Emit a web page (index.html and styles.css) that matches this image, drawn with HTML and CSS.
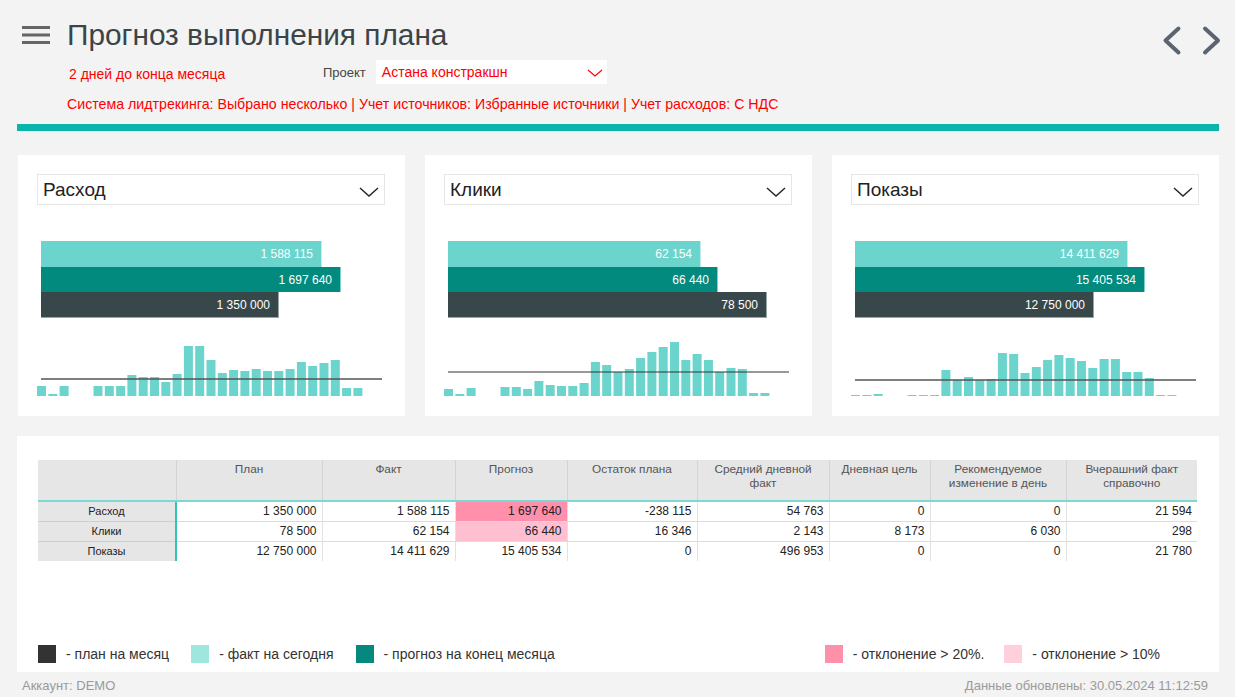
FILE: index.html
```html
<!DOCTYPE html>
<html lang="ru">
<head>
<meta charset="utf-8">
<title>Прогноз выполнения плана</title>
<link rel="stylesheet" href="styles.css">
</head>
<body>
<header class="top">
  <div class="title-row">
    <svg class="burger" viewBox="0 0 28 20" width="28" height="20">
      <rect x="0" y="1" width="28" height="3" fill="#666"/>
      <rect x="0" y="8.5" width="28" height="3" fill="#666"/>
      <rect x="0" y="16" width="28" height="3" fill="#666"/>
    </svg>
    <h1 class="title">Прогноз выполнения плана</h1>
    <svg class="nav" viewBox="0 0 62 31" width="62" height="31">
      <polyline points="18.5,3.5 5.5,15.5 18.5,27.5" fill="none" stroke="#5b6570" stroke-width="4" stroke-linecap="round" stroke-linejoin="round"/>
      <polyline points="45,3.5 58,15.5 45,27.5" fill="none" stroke="#5b6570" stroke-width="4" stroke-linecap="round" stroke-linejoin="round"/>
    </svg>
  </div>
  <div class="filter-row">
    <span class="days">2 дней до конца месяца</span>
    <span class="proj-label">Проект</span>
    <div class="proj-select">
      <span>Астана констракшн</span>
      <svg class="proj-chev" viewBox="0 0 16 8" width="16" height="8"><polyline points="1,1 8,7 15,1" fill="none" stroke="#f00" stroke-width="1.2"/></svg>
    </div>
  </div>
  <div class="filters-info">Система лидтрекинга: Выбрано несколько | Учет источников: Избранные источники | Учет расходов: С НДС</div>
</header>
<div class="accent"></div>

<section class="cards">
  <div class="card">
    <div class="card-select"><span>Расход</span><svg class="chev" viewBox="0 0 20 10" width="20" height="10"><polyline points="1,1 10,9 19,1" fill="none" stroke="#222" stroke-width="1.4"/></svg></div>
    <div class="hbars">
      <div class="hbar fact" style="width:281px">1 588 115</div>
      <div class="hbar forecast" style="width:300px">1 697 640</div>
      <div class="hbar plan" style="width:238px">1 350 000</div>
    </div>
    <svg class="spark" viewBox="0 0 387 60" width="387" height="60">
      <g fill="#6ad4cd">
        <rect x="19" y="50" width="9" height="10"/>
        <rect x="30.3" y="58" width="9" height="2"/>
        <rect x="41.6" y="50" width="9" height="10"/>
        <rect x="75.5" y="50" width="9" height="10"/>
        <rect x="86.8" y="50" width="9" height="10"/>
        <rect x="98.1" y="50" width="9" height="10"/>
        <rect x="109.4" y="39" width="9" height="21"/>
        <rect x="120.7" y="41" width="9" height="19"/>
        <rect x="132" y="41" width="9" height="19"/>
        <rect x="143.3" y="46" width="9" height="14"/>
        <rect x="154.6" y="38" width="9" height="22"/>
        <rect x="165.9" y="10" width="9" height="50"/>
        <rect x="177.2" y="10" width="9" height="50"/>
        <rect x="188.5" y="24" width="9" height="36"/>
        <rect x="199.8" y="37" width="9" height="23"/>
        <rect x="211.1" y="34" width="9" height="26"/>
        <rect x="222.4" y="35" width="9" height="25"/>
        <rect x="233.7" y="33" width="9" height="27"/>
        <rect x="245" y="35" width="9" height="25"/>
        <rect x="256.3" y="35" width="9" height="25"/>
        <rect x="267.6" y="33" width="9" height="27"/>
        <rect x="278.9" y="26" width="9" height="34"/>
        <rect x="290.2" y="30" width="9" height="30"/>
        <rect x="301.5" y="27" width="9" height="33"/>
        <rect x="312.8" y="24" width="9" height="36"/>
        <rect x="324.1" y="52" width="9" height="8"/>
        <rect x="335.4" y="52" width="9" height="8"/>
      </g>
      <line x1="23" y1="43" x2="364" y2="43" stroke="#555" stroke-width="1.4"/>
    </svg>
  </div>

  <div class="card">
    <div class="card-select"><span>Клики</span><svg class="chev" viewBox="0 0 20 10" width="20" height="10"><polyline points="1,1 10,9 19,1" fill="none" stroke="#222" stroke-width="1.4"/></svg></div>
    <div class="hbars">
      <div class="hbar fact" style="width:253px">62 154</div>
      <div class="hbar forecast" style="width:270px">66 440</div>
      <div class="hbar plan" style="width:319px">78 500</div>
    </div>
    <svg class="spark" viewBox="0 0 387 60" width="387" height="60">
      <g fill="#6ad4cd">
        <rect x="19" y="53" width="9" height="7"/>
        <rect x="30.3" y="58" width="9" height="2"/>
        <rect x="41.6" y="52" width="9" height="8"/>
        <rect x="75.5" y="51" width="9" height="9"/>
        <rect x="86.8" y="51" width="9" height="9"/>
        <rect x="98.1" y="53" width="9" height="7"/>
        <rect x="109.4" y="45" width="9" height="15"/>
        <rect x="120.7" y="49" width="9" height="11"/>
        <rect x="132" y="50" width="9" height="10"/>
        <rect x="143.3" y="50" width="9" height="10"/>
        <rect x="154.6" y="47" width="9" height="13"/>
        <rect x="165.9" y="26" width="9" height="34"/>
        <rect x="177.2" y="29" width="9" height="31"/>
        <rect x="188.5" y="36" width="9" height="24"/>
        <rect x="199.8" y="33" width="9" height="27"/>
        <rect x="211.1" y="22" width="9" height="38"/>
        <rect x="222.4" y="16" width="9" height="44"/>
        <rect x="233.7" y="11" width="9" height="49"/>
        <rect x="245" y="6" width="9" height="54"/>
        <rect x="256.3" y="24" width="9" height="36"/>
        <rect x="267.6" y="18" width="9" height="42"/>
        <rect x="278.9" y="24" width="9" height="36"/>
        <rect x="290.2" y="36" width="9" height="24"/>
        <rect x="301.5" y="32" width="9" height="28"/>
        <rect x="312.8" y="33" width="9" height="27"/>
        <rect x="324.1" y="57" width="9" height="3"/>
        <rect x="335.4" y="57" width="9" height="3"/>
      </g>
      <line x1="23" y1="36" x2="364" y2="36" stroke="#333" stroke-width="1.2"/>
    </svg>
  </div>

  <div class="card">
    <div class="card-select"><span>Показы</span><svg class="chev" viewBox="0 0 20 10" width="20" height="10"><polyline points="1,1 10,9 19,1" fill="none" stroke="#222" stroke-width="1.4"/></svg></div>
    <div class="hbars">
      <div class="hbar fact" style="width:273px">14 411 629</div>
      <div class="hbar forecast" style="width:290px">15 405 534</div>
      <div class="hbar plan" style="width:239px">12 750 000</div>
    </div>
    <svg class="spark" viewBox="0 0 387 60" width="387" height="60">
      <g fill="#6ad4cd">
        <rect x="19" y="59" width="9" height="1"/>
        <rect x="30.3" y="59" width="9" height="1"/>
        <rect x="41.6" y="58" width="9" height="2"/>
        <rect x="75.5" y="59" width="9" height="1"/>
        <rect x="86.8" y="59" width="9" height="1"/>
        <rect x="98.1" y="59" width="9" height="1"/>
        <rect x="109.4" y="34" width="9" height="26"/>
        <rect x="120.7" y="44" width="9" height="16"/>
        <rect x="132" y="41" width="9" height="19"/>
        <rect x="143.3" y="44" width="9" height="16"/>
        <rect x="154.6" y="43" width="9" height="17"/>
        <rect x="165.9" y="17" width="9" height="43"/>
        <rect x="177.2" y="18" width="9" height="42"/>
        <rect x="188.5" y="37" width="9" height="23"/>
        <rect x="199.8" y="31" width="9" height="29"/>
        <rect x="211.1" y="24" width="9" height="36"/>
        <rect x="222.4" y="19" width="9" height="41"/>
        <rect x="233.7" y="22" width="9" height="38"/>
        <rect x="245" y="25" width="9" height="35"/>
        <rect x="256.3" y="32" width="9" height="28"/>
        <rect x="267.6" y="23" width="9" height="37"/>
        <rect x="278.9" y="23" width="9" height="37"/>
        <rect x="290.2" y="36" width="9" height="24"/>
        <rect x="301.5" y="36" width="9" height="24"/>
        <rect x="312.8" y="42" width="9" height="18"/>
        <rect x="324.1" y="59" width="9" height="1"/>
        <rect x="335.4" y="59" width="9" height="1"/>
      </g>
      <line x1="23" y1="44" x2="364" y2="44" stroke="#555" stroke-width="1.4"/>
    </svg>
  </div>
</section>

<section class="table-panel">
  <table class="grid">
    <colgroup>
      <col style="width:138px"><col style="width:146px"><col style="width:133px"><col style="width:112px"><col style="width:130px"><col style="width:132px"><col style="width:101px"><col style="width:136px"><col style="width:131px">
    </colgroup>
    <thead>
      <tr>
        <th></th>
        <th>План</th>
        <th>Факт</th>
        <th>Прогноз</th>
        <th>Остаток плана</th>
        <th>Средний дневной факт</th>
        <th>Дневная цель</th>
        <th>Рекомендуемое изменение в день</th>
        <th>Вчерашний факт справочно</th>
      </tr>
    </thead>
    <tbody>
      <tr>
        <td class="rh">Расход</td>
        <td>1 350 000</td><td>1 588 115</td><td class="dev20">1 697 640</td><td>-238 115</td><td>54 763</td><td>0</td><td>0</td><td>21 594</td>
      </tr>
      <tr>
        <td class="rh">Клики</td>
        <td>78 500</td><td>62 154</td><td class="dev10">66 440</td><td>16 346</td><td>2 143</td><td>8 173</td><td>6 030</td><td>298</td>
      </tr>
      <tr class="last">
        <td class="rh">Показы</td>
        <td>12 750 000</td><td>14 411 629</td><td>15 405 534</td><td>0</td><td>496 953</td><td>0</td><td>0</td><td>21 780</td>
      </tr>
    </tbody>
  </table>

  <div class="legend">
    <div class="lg-item"><span class="lg-sq sq-plan"></span>- план на месяц</div>
    <div class="lg-item"><span class="lg-sq sq-fact"></span>- факт на сегодня</div>
    <div class="lg-item"><span class="lg-sq sq-forecast"></span>- прогноз на конец месяца</div>
    <div class="lg-right">
      <div class="lg-item"><span class="lg-sq sq-dev20"></span>- отклонение &gt; 20%.</div>
      <div class="lg-item"><span class="lg-sq sq-dev10"></span>- отклонение &gt; 10%</div>
    </div>
  </div>
</section>

<footer class="footer">
  <span>Аккаунт: DEMO</span>
  <span>Данные обновлены: 30.05.2024 11:12:59</span>
</footer>
</body>
</html>
```

FILE: styles.css
```css
html, body {
  margin: 0;
  padding: 0;
}

body {
  width: 1235px;
  height: 697px;
  overflow: hidden;
  background: #f3f3f3;
  font-family: "Liberation Sans", Arial, sans-serif;
  color: #222;
}

/* ---------- header ---------- */
.title-row {
  display: flex;
  align-items: flex-start;
  height: 34px;
  padding: 18px 13px 0 22px;
}

.burger {
  display: block;
  margin-top: 7px;
  flex: none;
}

.title {
  margin: 0 0 0 17px;
  font-size: 29.8px;
  font-weight: normal;
  line-height: 34px;
  color: #3b4447;
}

.nav {
  display: block;
  margin-left: auto;
  margin-top: 7px;
}

.filter-row {
  display: flex;
  align-items: center;
  height: 25px;
  margin-top: 7px;
  padding-left: 69px;
}

.days {
  width: 254px;
  font-size: 14px;
  color: #f00;
  padding-top: 5px;
}

.proj-label {
  font-size: 13px;
  color: #444;
  margin-right: 10px;
  padding-top: 1px;
}

.proj-select {
  width: 231px;
  height: 24px;
  box-sizing: border-box;
  background: #fff;
  display: flex;
  align-items: center;
  justify-content: space-between;
  padding: 1px 4px 0 6px;
  font-size: 14px;
  color: #f00;
}

.proj-chev {
  display: block;
  margin-top: 2px;
}

.filters-info {
  margin-top: 12px;
  padding-left: 67px;
  font-size: 14.2px;
  line-height: 16px;
  color: #f00;
}

.accent {
  margin: 12px 16px 0 17px;
  height: 7px;
  background: #08b5a9;
}

/* ---------- cards ---------- */
.cards {
  display: grid;
  grid-template-columns: repeat(3, 387px);
  column-gap: 20px;
  margin: 24px 0 0 18px;
}

.card {
  background: #fff;
  height: 261px;
}

.card-select {
  margin: 19px 20px 0 19px;
  height: 31px;
  box-sizing: border-box;
  border: 1px solid #e6e6e6;
  display: flex;
  align-items: center;
  justify-content: space-between;
  padding: 1px 5px 0 5px;
  font-size: 19px;
  color: #222;
}

.chev {
  display: block;
  margin-top: 3px;
}

.hbars {
  margin: 36px 0 0 23px;
  display: flex;
  flex-direction: column;
}

.hbar {
  height: 26px;
  box-sizing: border-box;
  display: flex;
  align-items: center;
  justify-content: flex-end;
  padding-right: 8px;
  font-size: 12px;
  color: #fff;
}

.hbar.fact {
  background: #6ad4cd;
  border-right: 1px solid #bdeeea;
}

.hbar.forecast {
  height: 25px;
  background: #038a7e;
  border-right: 1px solid #7fd0c8;
}

.hbar.plan {
  background: #37474a;
  border-right: 1px solid #9aa5a7;
  border-bottom: 1px solid #9aa5a7;
}

.spark {
  display: block;
  margin-top: 18px;
}

/* ---------- table ---------- */
.table-panel {
  margin: 20px 16px 0 17px;
  height: 236px;
  box-sizing: border-box;
  background: #fff;
  padding: 24px 0 0 21px;
  display: flex;
  flex-direction: column;
}

.grid {
  border-collapse: collapse;
  table-layout: fixed;
  width: 1159px;
  font-size: 12px;
}

.grid th {
  height: 41px;
  box-sizing: border-box;
  background: #e6e6e6;
  font-weight: normal;
  font-size: 11.8px;
  line-height: 14px;
  color: #555;
  vertical-align: top;
  padding: 2px 6px 0;
  border-right: 1px solid #d4d4d4;
  border-bottom: 2px solid #7dd8d1;
}

.grid th:last-child {
  border-right: none;
}

.grid td {
  height: 20px;
  box-sizing: border-box;
  padding: 0 5px;
  text-align: right;
  color: #222;
  border-right: 1px solid #e2e2e2;
  border-bottom: 1px solid #dcdcdc;
  line-height: 18px;
}

.grid td:last-child {
  border-right: none;
}

.grid td.rh {
  background: #e6e6e6;
  text-align: center;
  font-size: 11px;
  border-right: 2px solid #2ec4b6;
  border-bottom: 1px solid #cfcfcf;
}

.grid tr.last td {
  border-bottom: none;
}

.grid td.dev20 {
  background: #ff8fab;
}

.grid td.dev10 {
  background: #ffbfd0;
}

/* ---------- legend ---------- */
.legend {
  margin-top: auto;
  margin-bottom: 9px;
  display: flex;
  align-items: center;
  height: 18px;
  gap: 22px;
}

.lg-item {
  display: flex;
  align-items: center;
  gap: 10px;
  font-size: 14px;
  color: #333;
  white-space: nowrap;
}

.lg-sq {
  width: 18px;
  height: 18px;
  flex: none;
}

.sq-plan { background: #333; }
.sq-fact { background: #9ee6de; }
.sq-forecast { background: #05897e; }
.sq-dev20 { background: #ff90aa; }
.sq-dev10 { background: #ffd0db; }

.lg-right {
  margin-left: auto;
  margin-right: 59px;
  display: flex;
  align-items: center;
  gap: 20px;
}

/* ---------- footer ---------- */
.footer {
  display: flex;
  justify-content: space-between;
  align-items: center;
  height: 25px;
  padding: 1px 27px 0 22px;
  font-size: 13px;
  color: #9a9a9a;
}
```
